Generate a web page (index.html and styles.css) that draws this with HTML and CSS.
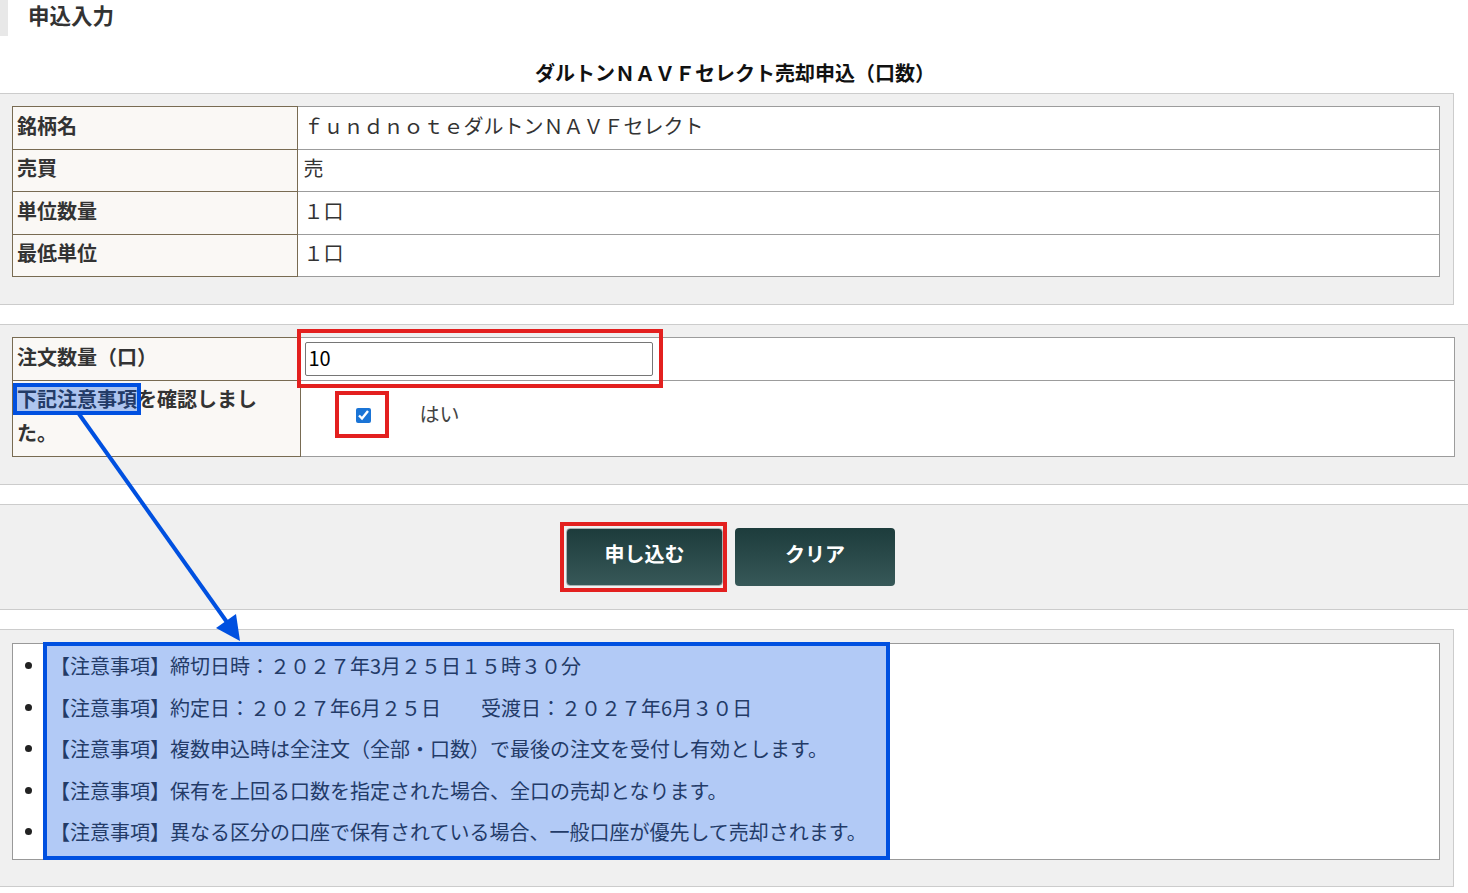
FILE: index.html
```html
<!DOCTYPE html>
<html lang="ja">
<head>
<meta charset="utf-8">
<title>申込入力</title>
<link rel="stylesheet" href="styles.css">
</head>
<body>
<div class="page">
  <h1 class="page-head">申込入力</h1>
  <h2 class="form-title">ダルトンＮＡＶＦセレクト売却申込（口数）</h2>

  <section class="panel panel-info">
    <table class="grid rows-info">
      <tr><th>銘柄名</th><td>ｆｕｎｄｎｏｔｅダルトンＮＡＶＦセレクト</td></tr>
      <tr><th>売買</th><td>売</td></tr>
      <tr><th>単位数量</th><td>１口</td></tr>
      <tr><th>最低単位</th><td>１口</td></tr>
    </table>
  </section>

  <section class="panel panel-order">
    <table class="grid">
      <tr class="row-qty">
        <th>注文数量（口）</th>
        <td><input class="qty" type="text" value="10"></td>
      </tr>
      <tr class="row-agree">
        <th><span class="wrap-label">下記注意事項を確認しました。</span></th>
        <td><label class="agree"><input type="checkbox" checked><span>はい</span></label></td>
      </tr>
    </table>
  </section>

  <section class="panel panel-actions">
    <div class="actions">
      <button class="btn btn-submit" type="button">申し込む</button>
      <button class="btn btn-clear" type="button">クリア</button>
    </div>
  </section>

  <section class="panel panel-notes">
    <div class="notes-box">
      <ul class="notes">
        <li>【注意事項】締切日時：２０２７年3月２５日１５時３０分</li>
        <li>【注意事項】約定日：２０２７年6月２５日　　受渡日：２０２７年6月３０日</li>
        <li>【注意事項】複数申込時は全注文（全部・口数）で最後の注文を受付し有効とします。</li>
        <li>【注意事項】保有を上回る口数を指定された場合、全口の売却となります。</li>
        <li>【注意事項】異なる区分の口座で保有されている場合、一般口座が優先して売却されます。</li>
      </ul>
    </div>
  </section>

  <div class="mark red mark-input"></div>
  <div class="mark red mark-check"></div>
  <div class="mark red mark-submit"></div>
  <div class="mark blue mark-label"></div>
  <div class="mark blue mark-notes"></div>
  <svg class="arrow" width="1468" height="893" viewBox="0 0 1468 893">
    <line x1="79" y1="414" x2="229" y2="625" stroke="#0050e0" stroke-width="4"/>
    <polygon points="240,641 216,628 236,614" fill="#0050e0"/>
  </svg>
</div>
</body>
</html>
```

FILE: styles.css
```css
* { box-sizing: border-box; }

html, body {
  margin: 0;
  padding: 0;
}

body {
  font-family: "Noto Sans CJK JP", "Noto Sans", sans-serif;
  font-size: 20px;
  color: #333;
  background: #fff;
  overflow: hidden;
}

.page {
  position: relative;
  width: 1468px;
  height: 893px;
  overflow: hidden;
}

.page-head {
  margin: 0;
  height: 36px;
  border-left: 8px solid #e8e8e8;
  padding-left: 20px;
  font-size: 21.5px;
  line-height: 30px;
  font-weight: bold;
  color: #333;
}

.form-title {
  margin: 21px 0 2px;
  width: 1461px;
  text-align: center;
  font-size: 20px;
  line-height: 32px;
  padding: 0 0 2px 9px;
  font-weight: bold;
  color: #111;
}

.panel {
  background: #f0f0f0;
  border: 1px solid #ccc;
  border-left: none;
}

.panel-info {
  width: 1454px;
  padding: 12px 13px 27px 12px;
}

.panel-order {
  width: 1476px;
  margin-top: 19px;
  padding: 12px 20px 27px 12px;
}

.panel-actions {
  width: 1476px;
  margin-top: 19px;
  padding: 23px 0 23px 0;
}

.panel-notes {
  width: 1454px;
  margin-top: 19px;
  padding: 13px 13px 26px 12px;
}

/* tables */
.grid {
  width: 100%;
  border-collapse: collapse;
}

.grid th {
  width: 20%;
  background: #faf8f5;
  border: 1px solid #786b52;
  text-align: left;
  font-weight: bold;
  color: #333;
  padding: 0 4px 4px;
  line-height: 34px;
  vertical-align: middle;
}

.grid td {
  background: #fff;
  border: 1px solid #9c9c9c;
  padding: 0 5px 4px;
  line-height: 34px;
  vertical-align: middle;
}

.rows-info tr { height: 42.5px; }

.row-qty { height: 43px; }
.row-qty td { padding: 0 4px; }

.row-agree { height: 76px; }
.row-agree th { padding: 0 12px 6px 4px; }

.wrap-label { display: block; }

.qty {
  display: block;
  width: 348px;
  height: 34px;
  margin: 0;
  padding: 0 2px 3px;
  border: 1px solid #767676;
  border-radius: 2px;
  font-family: "Noto Sans CJK JP", "Noto Sans", sans-serif;
  font-size: 20px;
  color: #000;
  background: #fff;
}

.agree {
  display: flex;
  align-items: center;
  padding-bottom: 2px;
}

.agree input {
  width: 15px;
  height: 15px;
  margin: 0 48px 0 50px;
  accent-color: #1a74d6;
}

.agree span {
  color: #444;
  font-weight: 400;
  padding-bottom: 3px;
}

/* buttons */
.actions {
  width: 1461px;
  display: flex;
  justify-content: center;
  gap: 12px;
}

.btn {
  height: 58px;
  border: none;
  border-radius: 4px;
  background: linear-gradient(#1d3c3c, #375858);
  color: #fff;
  font-family: "Noto Sans CJK JP", "Noto Sans", sans-serif;
  font-size: 20px;
  font-weight: bold;
  padding: 0 0 7px;
}

.btn-submit {
  width: 157px;
  border: 1px solid #a9b3b3;
}

.btn-clear { width: 160px; }

/* notes */
.notes-box {
  background: #fff;
  border: 1px solid #999;
}

.notes {
  list-style: none;
  margin: 0;
  padding: 1px 0 6.5px 11.5px;
}

.notes li {
  display: flex;
  align-items: center;
  height: 41.5px;
  line-height: 41.5px;
  color: #333;
  white-space: nowrap;
}

.notes li::before {
  content: "";
  flex: none;
  width: 7px;
  height: 7px;
  border-radius: 50%;
  background: #222;
  margin-right: 18.5px;
}

/* annotations */
.mark {
  position: absolute;
  pointer-events: none;
}

.red { border: 4px solid #e3201f; }

.blue {
  border: 4px solid #0050e0;
  background: rgba(0, 80, 224, 0.3);
}

.mark-input { left: 297px; top: 329px; width: 366px; height: 59px; }
.mark-check { left: 335px; top: 391px; width: 54px; height: 47px; }
.mark-submit { left: 560px; top: 522px; width: 167px; height: 70px; }
.mark-label { left: 13px; top: 383px; width: 128px; height: 32px; }
.mark-notes { left: 43px; top: 642px; width: 847px; height: 218px; }

.arrow {
  position: absolute;
  left: 0;
  top: 0;
  pointer-events: none;
}
```
